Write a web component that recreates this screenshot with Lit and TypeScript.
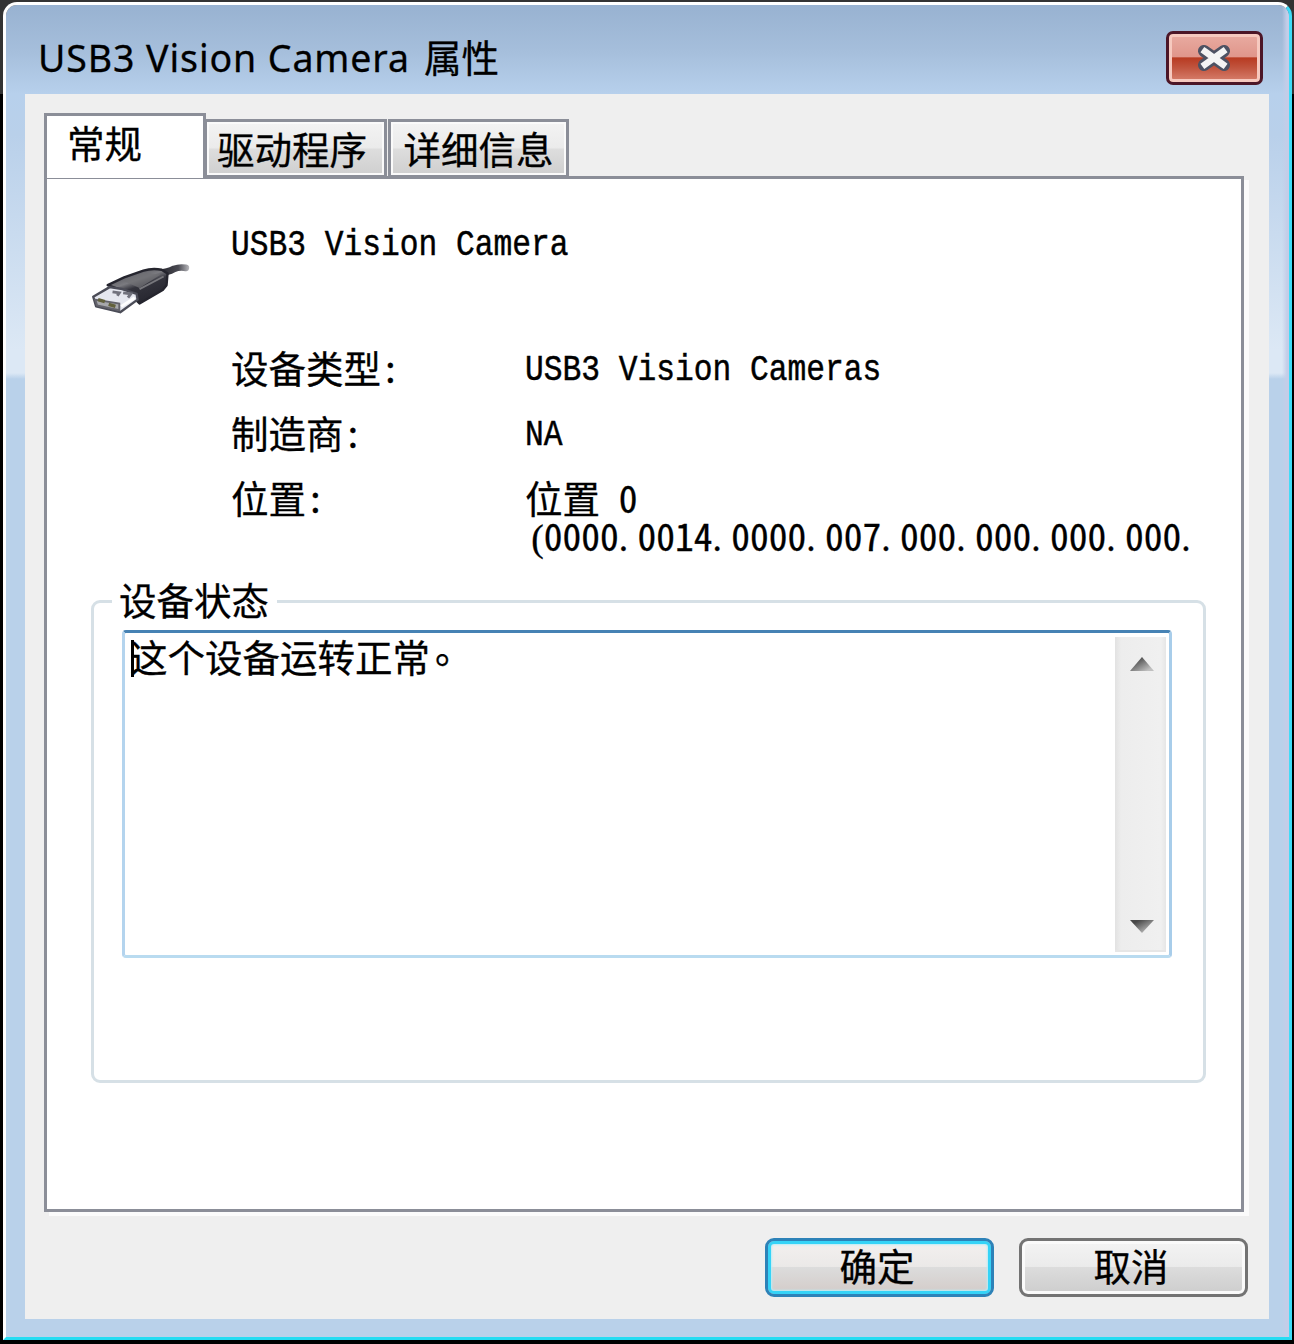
import { LitElement, html, css, svg } from "lit";
import { customElement, property } from "lit/decorators.js";

@customElement("push-button")
class PushButton extends LitElement {
  @property({ type: Boolean }) primary = false;

  static styles = css`
    :host { display: block; }
    .button {
      box-sizing: border-box;
      width: 229px;
      height: 59px;
      padding: 0 5px 6px 0;
      display: flex;
      align-items: center;
      justify-content: center;
      border: 3px solid #737373;
      border-radius: 9px;
      background: linear-gradient(#f3f3f3 0%, #ebebeb 48%, #dcdcdc 50%, #cdcdcd 100%);
      box-shadow: inset 0 0 0 3px #fafafa;
      font: 37.5px/50px "Noto Sans CJK SC", sans-serif;
      -webkit-text-stroke: 0.3px #000;
      color: #000;
    }
    .primary {
      border-color: #2d82b8;
      background: linear-gradient(#f3f0ef 0%, #ebe9e8 48%, #dcdcdc 50%, #d3cbc8 100%);
      box-shadow: inset 0 0 0 3px #35d3f7, inset 0 0 2px 4px #b9ecf6;
    }
  `;

  render() {
    return html`<button class="button ${this.primary ? "primary" : ""}"><slot></slot></button>`;
  }
}

@customElement("app-root")
class AppRoot extends LitElement {
  static styles = css`
    :host {
      display: block;
      width: 1294px;
      height: 1344px;
      overflow: hidden;
      background: linear-gradient(#333 0 94px, #000 94px);
      font: 37.5px/38px "Noto Sans CJK SC", sans-serif;
      -webkit-text-stroke: 0.3px #000;
      color: #000;
    }
    * { box-sizing: border-box; }
    .desktop { height: 1344px; padding: 2px 2px 4px 3px; }
    .window {
      height: 1338px;
      border: 3px solid #fff;
      border-right-color: #3fdcf8;
      border-bottom-color: #25dcf2;
      border-radius: 14px 14px 0 0;
      padding: 0 20px 18px 19px;
      display: flex;
      flex-direction: column;
      background:
        linear-gradient(90deg, transparent 1276px, #c3cde8 1281px) padding-box,
        linear-gradient(#98b2d1 0, #a5bedb 45px, #b7d0ec 89px, #b9d0ea 130px, #dce8f5 345px, #dce8f5 368px, #b9d1ea 374px, #b9d1ea 100%) padding-box;
    }
    .titlebar {
      height: 89px;
      flex: none;
      display: flex;
      align-items: flex-start;
      justify-content: space-between;
      padding: 26px 6px 0 13px;
    }
    .title { display: flex; height: 54px; align-items: center; }
    .title-latin {
      width: 386px;
      white-space: nowrap;
      font-family: "Noto Sans", sans-serif;
      letter-spacing: 0.9px;
    }
    .title-cjk { margin-top: -5px; }
    .close {
      width: 97px;
      height: 54px;
      padding: 0 2px 0 0;
      display: flex;
      align-items: center;
      justify-content: center;
      border: 3px solid #4c1627;
      border-radius: 7px;
      background: linear-gradient(#e9aca2 0, #e0968b 47%, #b83b22 50%, #c1543e 70%, #d88270 100%);
      box-shadow: inset 0 0 0 3px #f6c9bf;
    }
    .client {
      flex: 1;
      padding: 19px 25px 0 19px;
      background: #efefef;
      display: flex;
      flex-direction: column;
    }
    .tabs { display: flex; height: 65px; align-items: flex-end; margin-bottom: -2px; position: relative; }
    .tab {
      width: 183px;
      height: 59px;
      margin-right: 1px;
      border: 3px solid #8b8e98;
      padding: 7px 7px 0 0;
      text-align: center;
      white-space: nowrap;
      background: linear-gradient(#f3f3f3 0, #ebebeb 48%, #dddddd 52%, #cfcfcf 100%);
      box-shadow: inset 0 0 0 2px #fafafa;
    }
    .tab.last { width: 181px; margin: 0; padding-right: 0; }
    .tab.active {
      width: 162px;
      height: 65px;
      margin-right: -2px;
      padding: 7px 0 0 20px;
      text-align: left;
      border-bottom: 0;
      background: #fff;
      box-shadow: none;
    }
    .page {
      width: 1200px;
      height: 1036px;
      flex: none;
      border: 3px solid #8b8e98;
      background: #fff;
      box-shadow: 5px 4px 0 #fbfbfb;
      padding: 47px 35px 0 44px;
    }
    .device { display: flex; align-items: flex-start; height: 122px; }
    .device svg { width: 99px; height: 54px; margin: 37px 41px 0 0; }
    .mono {
      display: inline-block;
      vertical-align: top;
      white-space: pre;
      font-family: "Liberation Mono", monospace;
      transform: scaleX(0.8333);
      transform-origin: left;
      -webkit-text-stroke: 0.5px #000;
    }
    .half { font-feature-settings: "hwid"; white-space: pre; }
    .dot { font-family: "Liberation Serif", serif; letter-spacing: 9.375px; }
    .paren { font-family: "Liberation Serif", serif; margin-left: 6.25px; }
    .facts {
      display: grid;
      grid-template-columns: 294px 1fr;
      grid-template-rows: 38px 38px 76px;
      row-gap: 27px;
      height: 230px;
      align-content: start;
      padding-left: 140px;
      margin: 0;
    }
    .facts dd, .facts dt { margin: 0; white-space: nowrap; }
    .facts dd .mono { margin-top: 3px; }
    .status {
      margin: 0;
      width: 1115px;
      height: 505px;
      padding: 6px 30px 0 28px;
      border: 3px solid #d6e0e6;
      border-radius: 9px;
    }
    .status legend { padding: 0 8px 0 7px; margin-left: -10px; height: 46px; line-height: 42px; }
    .box {
      position: relative;
      width: 1050px;
      height: 328px;
      border: 3px solid #b4d4ee;
      border-top-color: #4682b4;
      border-right-color: #a8cdea;
      border-bottom-color: #b9dbf0;
      border-radius: 4px;
      padding: 4px 3px 3px 5px;
      display: flex;
      justify-content: space-between;
    }
    .stop { display: inline-block; transform: translate(5px, -9px); }
    .caret { position: absolute; left: 6px; top: 7px; width: 3px; height: 37px; background: #000; }
    .scroll {
      width: 51px;
      height: 315px;
      display: flex;
      flex-direction: column;
      justify-content: space-between;
      align-items: center;
      padding: 20px 0 16px 2px;
      background: linear-gradient(90deg, #e2e2e2, #ededed 12%, #f0f0f0 90%, #e6e6e6);
      border-bottom: 2px solid #e6e6e6;
    }
    .scroll svg { width: 24px; height: 15px; }
    .actions { display: flex; justify-content: flex-end; gap: 25px; padding-top: 26px; margin-right: -4px; }
  `;

  private arrow(points: string, id: string) {
    return html`<svg viewBox="0 0 24 15">
      <defs><linearGradient id=${id} x1="0" y1="0" x2="1" y2="1">
        <stop offset="0.2" stop-color="#484848" /><stop offset="0.85" stop-color="#c0c0c0" />
      </linearGradient></defs>
      <polygon points=${points} fill="url(#${id})" />
    </svg>`;
  }

  private plug() {
    return html`<svg viewBox="0 0 102 56">
      <defs>
        <linearGradient id="body" x1="0" y1="0" x2="0.6" y2="1">
          <stop offset="0" stop-color="#3b3b43" /><stop offset="0.45" stop-color="#7b7b80" />
          <stop offset="0.6" stop-color="#33333c" /><stop offset="1" stop-color="#26262f" />
        </linearGradient>
        <linearGradient id="cable" gradientUnits="userSpaceOnUse" x1="74" y1="0" x2="101" y2="0">
          <stop offset="0" stop-color="#2b2b33" /><stop offset="0.6" stop-color="#4a4a52" />
          <stop offset="1" stop-color="#b5b5b9" />
        </linearGradient>
      </defs>
      ${svg`
        <path d="M70 10 Q79 10 86 6 Q91 4 98 5" stroke="url(#cable)" stroke-width="7" stroke-linecap="round" fill="none" />
        <path d="M17 23 L34 15 L54 8 Q63 5 73 7 L79 11 L78 23 L74 28 L50 42 L39 31 Z" fill="url(#body)" stroke="#25252e" stroke-width="2.5" stroke-linejoin="round" />
        <path d="M34 19 L54 10 L72 12 L50 26 Z" fill="#707074" opacity="0.75" />
        <path d="M50 27 L75 14" stroke="#77777c" stroke-width="2" />
        <path d="M2 35 L19 25 L32 27 L47 32 L48 38 L30 51 L5 45 Z" fill="#e5e7ef" stroke="#4b4c57" stroke-width="2.5" stroke-linejoin="round" />
        <path d="M4 38 L29 42 L29 49 L6 44 Z" fill="#a7a8ac" stroke="#63636b" stroke-width="2" />
        <path d="M7 38 L14 40 M18 43 L25 45" stroke="#62613c" stroke-width="3.5" />
        <path d="M22 30 l7 1 -2 3 M33 31 l8 1 -3 4" stroke="#71727d" stroke-width="3" fill="none" />
        <path d="M31 45 L45 36" stroke="#ffffff" stroke-width="3" />
      `}
    </svg>`;
  }

  private halfWidth(text: string) {
    return html`<span class="half">${[...text].map((c) =>
      c === "." ? html`<span class="dot">.</span>` : c === "(" ? html`<span class="paren">(</span>` : c
    )}</span>`;
  }

  render() {
    return html`
      <div class="desktop">
        <div class="window">
          <div class="titlebar">
            <div class="title"><span class="title-latin">USB3 Vision Camera</span><span class="title-cjk">属性</span></div>
            <button class="close">
              <svg width="36" height="28" viewBox="0 0 36 28">
                <path d="M8 7 L28 21 M28 7 L8 21" stroke="#4d5263" stroke-width="12" stroke-linecap="round" />
                <path d="M9 7.5 L27 20.5 M27 7.5 L9 20.5" stroke="#f4f4f4" stroke-width="6.5" stroke-linecap="square" />
              </svg>
            </button>
          </div>
          <div class="client">
            <div class="tabs">
              <div class="tab active">常规</div>
              <div class="tab">驱动程序</div>
              <div class="tab last">详细信息</div>
            </div>
            <div class="page">
              <div class="device">
                ${this.plug()}
                <span class="mono">USB3 Vision Camera</span>
              </div>
              <dl class="facts">
                <dt>设备类型<span class="half">:</span></dt>
                <dd><span class="mono">USB3 Vision Cameras</span></dd>
                <dt>制造商<span class="half">:</span></dt>
                <dd><span class="mono">NA</span></dd>
                <dt>位置<span class="half">:</span></dt>
                <dd>位置<span class="half"> 0</span><br />${this.halfWidth("(0000.0014.0000.007.000.000.000.000.")}</dd>
              </dl>
              <fieldset class="status">
                <legend>设备状态</legend>
                <div class="box">
                  <span class="message">这个设备运转正常<span class="stop">。</span></span>
                  <span class="caret"></span>
                  <div class="scroll">
                    ${this.arrow("12,0 24,14 0,14", "up")}
                    ${this.arrow("0,1 24,1 12,14", "down")}
                  </div>
                </div>
              </fieldset>
            </div>
            <div class="actions">
              <push-button primary>确定</push-button>
              <push-button>取消</push-button>
            </div>
          </div>
        </div>
      </div>
    `;
  }
}
